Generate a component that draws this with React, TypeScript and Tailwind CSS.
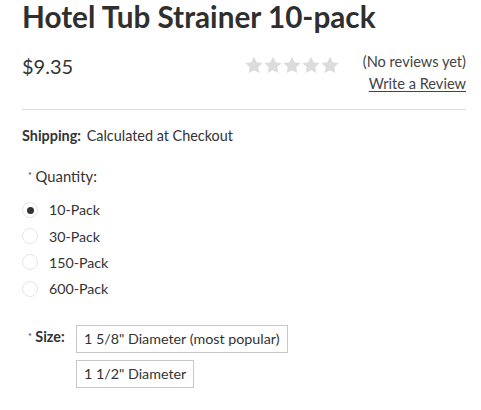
import React from 'react';

const Star = () => (
  <svg width="18" height="18" viewBox="0 0 24 23" className="fill-[#dcdcdc]">
    <path d="M12 0.5l3.5 7.3 8 1.1-5.8 5.5 1.4 7.9L12 18.5l-7.1 3.8 1.4-7.9L0.5 8.9l8-1.1z" />
  </svg>
);

const packs = ['10-Pack', '30-Pack', '150-Pack', '600-Pack'];

export default function App() {
  return (
    <div className="bg-white min-h-[410px] pl-[22px] pr-[15px] text-[#333] font-['Lato','Liberation_Sans',sans-serif]">
      <h1 className="text-[29.7px] leading-[34px] font-bold text-[#2f2f2f]">Hotel Tub Strainer 10-pack</h1>

      <div className="mt-[17px] flex items-start justify-between">
        <div className="mt-[3px] text-[20px] leading-[24px]">$9.35</div>
        <div className="flex items-start">
          <div className="mt-[5px] flex gap-[1px]">
            <Star />
            <Star />
            <Star />
            <Star />
            <Star />
          </div>
          <div className="ml-[24px] text-right text-[14.6px] leading-[22px] text-[#444]">
            <div>(No reviews yet)</div>
            <a href="#" className="underline underline-offset-2">Write a Review</a>
          </div>
        </div>
      </div>

      <div className="mt-[14px] border-t border-[#dedede]" />

      <div className="mt-[16px] text-[14.4px] leading-[20px]">
        <span className="font-bold">Shipping:</span> <span className="ml-[2px]">Calculated at Checkout</span>
      </div>

      <div className="mt-[20px] ml-[6px] text-[14.8px] leading-[20px]">
        <span className="text-[9px] align-top">*</span> Quantity:
      </div>

      <div className="mt-[11px] flex flex-col">
        {packs.map((p, i) => (
          <label key={p} className="flex h-[26.2px] items-center text-[14.2px]">
            <span className="flex h-[16px] w-[16px] items-center justify-center rounded-full border border-[#e6e6e6]">
              {i === 0 && <span className="h-[7px] w-[7px] rounded-full bg-[#333]" />}
            </span>
            <span className="ml-[11px]">{p}</span>
          </label>
        ))}
      </div>

      <div className="mt-[23px] flex items-start">
        <div className="ml-[6px] mt-[2px] w-[48px] text-[14.4px] leading-[20px] font-bold">
          <span className="text-[9px] align-top font-normal">*</span> Size:
        </div>
        <div className="flex flex-col items-start gap-[7px]">
          <div className="h-[28px] border border-[#c8c8c8] px-[7px] text-[14.3px] leading-[26px]">1 5/8" Diameter (most popular)</div>
          <div className="h-[28px] border border-[#c8c8c8] px-[7px] text-[14.3px] leading-[26px]">1 1/2" Diameter</div>
        </div>
      </div>
    </div>
  );
}
